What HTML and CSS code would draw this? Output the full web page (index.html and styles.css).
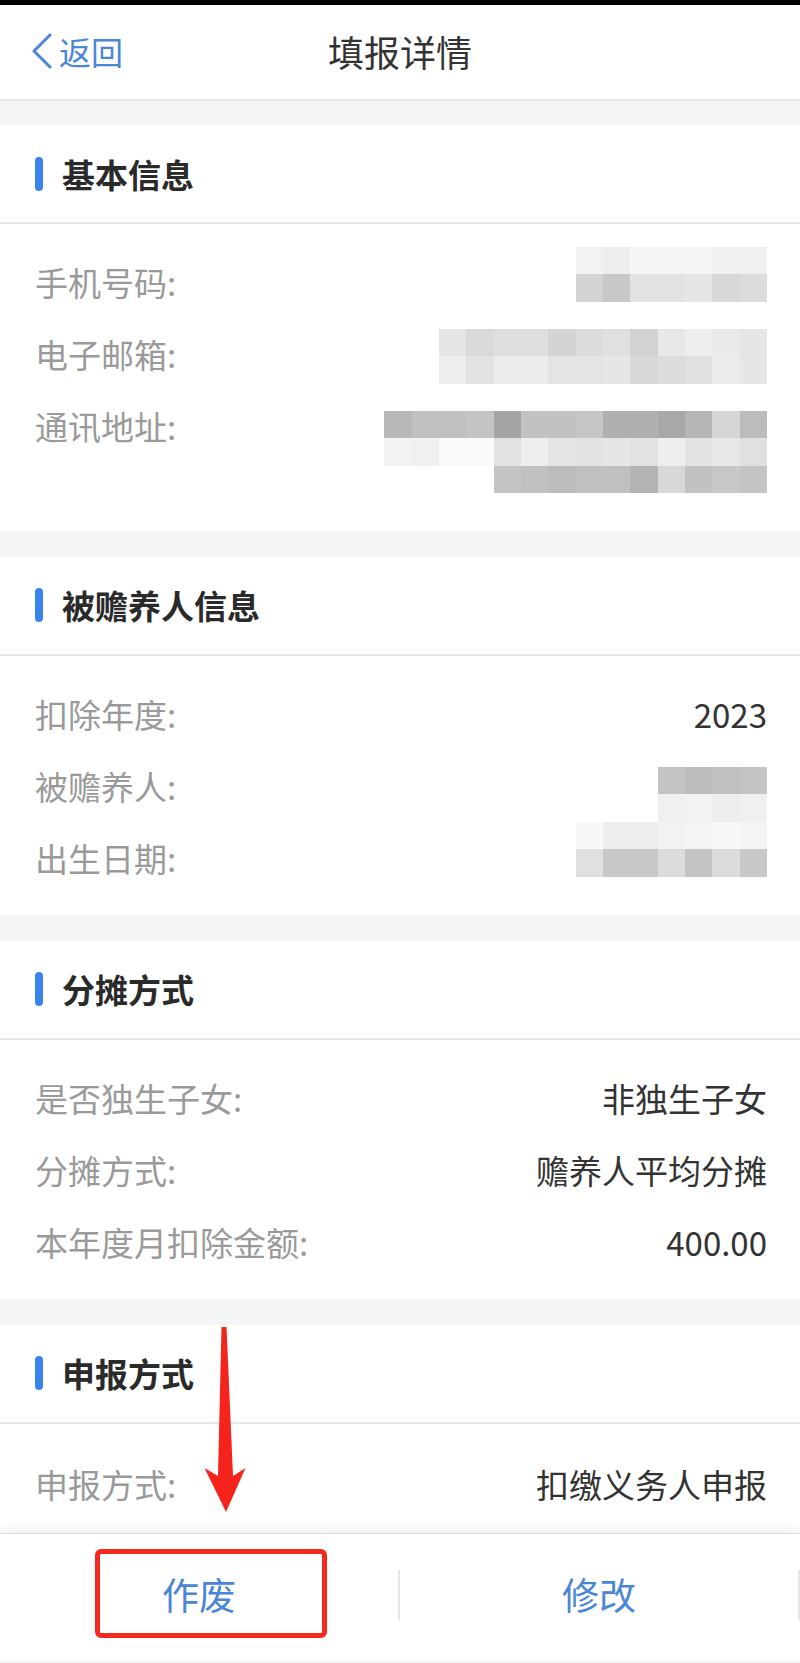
FILE: index.html
```html
<!DOCTYPE html>
<html lang="zh-CN">
<head>
<meta charset="utf-8">
<title>填报详情</title>
<link rel="stylesheet" href="styles.css">
</head>
<body>
<div class="page">
  <div class="statusbar"></div>
  <header class="nav">
    <a class="back"><svg class="chev" width="20" height="36" viewBox="0 0 20 36"><polyline points="18,2 2,18 18,34"/></svg><span>返回</span></a>
    <h1 class="title">填报详情</h1>
    <span class="nav-spacer"></span>
  </header>

  <main class="content">
    <section class="card card-first">
      <h2 class="card-head"><span class="bar"></span>基本信息</h2>
      <div class="card-body">
        <div class="row">
          <span class="label">手机号码:</span>
          <div class="mosaic cols7 mt-phone">
            <i class="gf2"></i><i class="gee"></i><i class="gf5"></i><i class="gf5"></i><i class="gf5"></i><i class="gf0"></i><i class="gf0"></i>
            <i class="gd4"></i><i class="gc8"></i><i class="ge2"></i><i class="ge2"></i><i class="ge6"></i><i class="gd8"></i><i class="gdc"></i>
          </div>
        </div>
        <div class="row">
          <span class="label">电子邮箱:</span>
          <div class="mosaic cols12 mt-email">
            <i class="ge6"></i><i class="gda"></i><i class="gde"></i><i class="gde"></i><i class="gd4"></i><i class="gdc"></i><i class="ge0"></i><i class="gd2"></i><i class="ge8"></i><i class="gee"></i><i class="gea"></i><i class="ge6"></i>
            <i class="gee"></i><i class="ge2"></i><i class="gec"></i><i class="gec"></i><i class="ge4"></i><i class="ge4"></i><i class="ge6"></i><i class="gd8"></i><i class="gdc"></i><i class="ge0"></i><i class="gec"></i><i class="ge6"></i>
          </div>
        </div>
        <div class="row">
          <span class="label">通讯地址:</span>
          <div class="mosaic cols14 mt-addr">
            <i class="gb8"></i><i class="gc0"></i><i class="gc0"></i><i class="gc4"></i><i class="ga4"></i><i class="gc2"></i><i class="gc2"></i><i class="gc6"></i><i class="gb0"></i><i class="gb0"></i><i class="ga8"></i><i class="gb6"></i><i class="gd6"></i><i class="gbc"></i>
            <i class="gf2"></i><i class="gf0"></i><i class="gfa"></i><i class="gfa"></i><i class="ge2"></i><i class="gee"></i><i class="ge4"></i><i class="ge2"></i><i class="ge6"></i><i class="ge2"></i><i class="gee"></i><i class="ge2"></i><i class="ge8"></i><i class="ge0"></i>
            <i class="gx"></i><i class="gx"></i><i class="gx"></i><i class="gx"></i><i class="gc4"></i><i class="gc0"></i><i class="gbc"></i><i class="gc0"></i><i class="gc0"></i><i class="gb4"></i><i class="gd8"></i><i class="gc2"></i><i class="gc8"></i><i class="gc4"></i>
          </div>
        </div>
      </div>
    </section>

    <section class="card">
      <h2 class="card-head"><span class="bar"></span>被赡养人信息</h2>
      <div class="card-body body-tail">
        <div class="row">
          <span class="label">扣除年度:</span>
          <span class="value">2023</span>
        </div>
        <div class="row">
          <span class="label">被赡养人:</span>
          <div class="mosaic cols4 mt-name">
            <i class="gc4"></i><i class="gbc"></i><i class="gc0"></i><i class="gc4"></i>
            <i class="gf0"></i><i class="gf2"></i><i class="gee"></i><i class="gf0"></i>
          </div>
        </div>
        <div class="row">
          <span class="label">出生日期:</span>
          <div class="mosaic cols7">
            <i class="gf8"></i><i class="gee"></i><i class="gee"></i><i class="gf2"></i><i class="gf4"></i><i class="gf8"></i><i class="gf4"></i>
            <i class="ge0"></i><i class="gc8"></i><i class="gc8"></i><i class="gdc"></i><i class="gc4"></i><i class="gdc"></i><i class="gc8"></i>
          </div>
        </div>
      </div>
    </section>

    <section class="card">
      <h2 class="card-head"><span class="bar"></span>分摊方式</h2>
      <div class="card-body body-tail">
        <div class="row">
          <span class="label">是否独生子女:</span>
          <span class="value">非独生子女</span>
        </div>
        <div class="row">
          <span class="label">分摊方式:</span>
          <span class="value">赡养人平均分摊</span>
        </div>
        <div class="row">
          <span class="label">本年度月扣除金额:</span>
          <span class="value">400.00</span>
        </div>
      </div>
    </section>

    <section class="card">
      <h2 class="card-head"><span class="bar"></span>申报方式</h2>
      <div class="card-body body-last">
        <div class="row">
          <span class="label">申报方式:</span>
          <span class="value">扣缴义务人申报</span>
        </div>
      </div>
    </section>
  </main>

  <footer class="footer">
    <button class="action">作废</button>
    <span class="divider"></span>
    <button class="action">修改</button>
    <span class="divider"></span>
    <span class="highlight-box"></span>
  </footer>

  <svg class="arrow" width="50" height="200" viewBox="0 0 50 200">
    <polygon points="21.5,7 26.5,7 33,156 45.5,148 26,192 4.5,148 18,156"/>
  </svg>
</div>
</body>
</html>
```

FILE: styles.css
```css
* { box-sizing: border-box; }

html, body {
  margin: 0;
  padding: 0;
}

body {
  width: 800px;
  background: #f4f5f7;
  font-family: "Noto Sans CJK SC", "Noto Sans", sans-serif;
  color: #333;
}

.page {
  position: relative;
  width: 800px;
  min-height: 1663px;
  background: #f4f5f7;
}

.statusbar {
  height: 5px;
  background: #000;
}

.nav {
  height: 96px;
  background: #fff;
  border-bottom: 2px solid #e4e5e7;
  display: grid;
  grid-template-columns: 1fr auto 1fr;
  align-items: center;
  padding: 0 32px 2px;
}

.back {
  display: flex;
  align-items: center;
  gap: 7px;
  color: #4a86d6;
  font-size: 32px;
  line-height: 1;
}

.chev polyline {
  fill: none;
  stroke: #4a86d6;
  stroke-width: 3;
  stroke-linecap: round;
  stroke-linejoin: round;
}

.title {
  margin: 0;
  font-size: 36px;
  font-weight: 400;
  color: #333;
  line-height: 1;
}

.content {
  display: flex;
  flex-direction: column;
}

.card {
  background: #fff;
  margin-top: 26px;
}

.card-first {
  margin-top: 24px;
}

.card-head {
  margin: 0;
  height: 99px;
  border-bottom: 2px solid #e6e7e9;
  display: flex;
  align-items: center;
  gap: 19px;
  padding-left: 35px;
  font-size: 33px;
  font-weight: 700;
  color: #2a2a2a;
}

.bar {
  width: 8px;
  height: 34px;
  border-radius: 4px;
  background: #3b84ee;
}

.card-body {
  padding: 22px 33px 38px 35px;
}

.body-tail {
  padding-bottom: 21px;
}

.body-last {
  padding-top: 24px;
  padding-bottom: 13px;
}

.row {
  display: flex;
  justify-content: space-between;
  align-items: flex-start;
  min-height: 72px;
}

.label {
  font-size: 33px;
  line-height: 72px;
  color: #9a9a9a;
  white-space: nowrap;
}

.value {
  font-size: 33px;
  line-height: 72px;
  color: #333;
  white-space: nowrap;
}

/* pixelated redaction blocks */
.mosaic {
  display: grid;
  grid-auto-rows: 27.33px;
}
.cols4 { grid-template-columns: repeat(4, 27.35px); }
.cols7 { grid-template-columns: repeat(7, 27.35px); }
.cols12 { grid-template-columns: repeat(12, 27.35px); }
.cols14 { grid-template-columns: repeat(14, 27.35px); }

.mt-phone { margin-top: 1px; }
.mt-email { margin-top: 11px; }
.mt-addr { margin-top: 21px; }
.mt-name { margin-top: 17px; }

.gx { background: transparent; }
.ga4 { background: #a4a4a4; }
.ga8 { background: #a8a8a8; }
.gb0 { background: #b0b0b0; }
.gb4 { background: #b4b4b4; }
.gb6 { background: #b6b6b6; }
.gb8 { background: #b8b8b8; }
.gbc { background: #bcbcbc; }
.gc0 { background: #c0c0c0; }
.gc2 { background: #c2c2c2; }
.gc4 { background: #c4c4c4; }
.gc6 { background: #c6c6c6; }
.gc8 { background: #c8c8c8; }
.gd2 { background: #d2d2d2; }
.gd4 { background: #d4d4d4; }
.gd6 { background: #d6d6d6; }
.gd8 { background: #d8d8d8; }
.gda { background: #dadada; }
.gdc { background: #dcdcdc; }
.gde { background: #dedede; }
.ge0 { background: #e0e0e0; }
.ge2 { background: #e2e2e2; }
.ge4 { background: #e4e4e4; }
.ge6 { background: #e6e6e6; }
.ge8 { background: #e8e8e8; }
.gea { background: #eaeaea; }
.gec { background: #ececec; }
.gee { background: #eeeeee; }
.gf0 { background: #f0f0f0; }
.gf2 { background: #f2f2f2; }
.gf4 { background: #f4f4f4; }
.gf5 { background: #f5f5f5; }
.gf8 { background: #f8f8f8; }
.gfa { background: #fafafa; }

.footer {
  position: relative;
  height: 128px;
  background: #fff;
  border-top: 1px solid #dcdcdc;
  box-shadow: 0 -5px 10px rgba(0, 0, 0, 0.06);
  display: grid;
  grid-template-columns: 398px 2px 398px 2px;
  align-items: center;
  padding-bottom: 5px;
}

.action {
  border: 0;
  background: transparent;
  padding: 0;
  font-family: "Noto Sans CJK SC", "Noto Sans", sans-serif;
  font-size: 37px;
  color: #4a86d6;
  line-height: 1;
  text-align: center;
}

.divider {
  height: 50px;
  background: #e6e6e6;
}

.highlight-box {
  position: absolute;
  left: 95px;
  top: 15px;
  width: 232px;
  height: 89px;
  border: 5px solid #f42a1e;
  border-radius: 6px;
}

.arrow {
  position: absolute;
  left: 200px;
  top: 1320px;
}

.arrow polygon {
  fill: #f5231b;
}
```
